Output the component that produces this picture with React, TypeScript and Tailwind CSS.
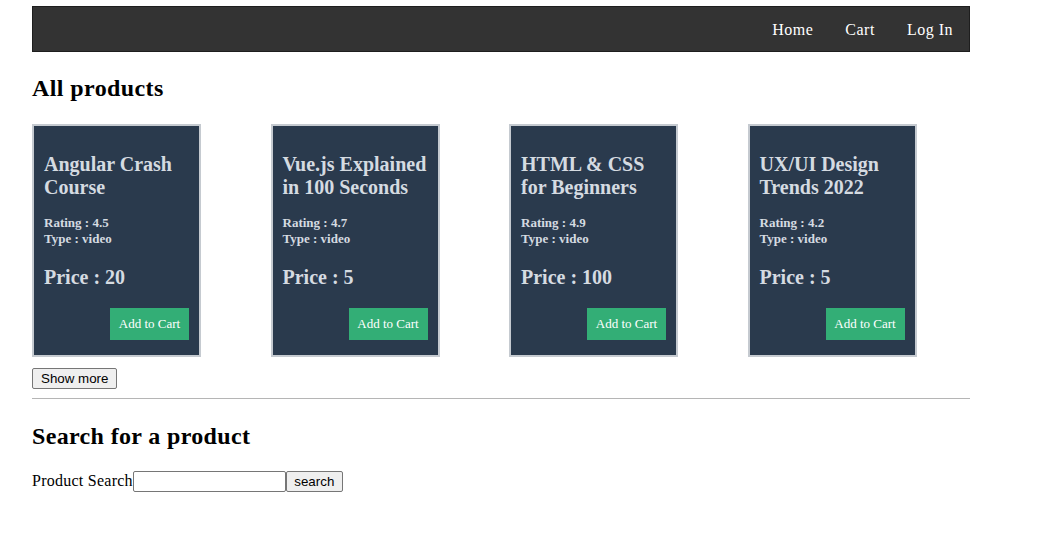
import React from "react";

const products = [
  { name: "Angular Crash Course", rating: 4.5, type: "video", price: 20 },
  { name: "Vue.js Explained in 100 Seconds", rating: 4.7, type: "video", price: 5 },
  { name: "HTML & CSS for Beginners", rating: 4.9, type: "video", price: 100 },
  { name: "UX/UI Design Trends 2022", rating: 4.2, type: "video", price: 5 },
];

const serif = "font-['Liberation_Serif','Times_New_Roman',serif]";
const sans = "font-['Liberation_Sans',Arial,sans-serif]";

function ProductCard({ p }: { p: (typeof products)[number] }) {
  return (
    <div className="w-[169px] h-[233px] bg-[#2a3a4d] border-2 border-[#c5cad0] text-[#d5dbe1] px-[10px] pt-[27px] flex flex-col">
      <h3 className="text-[20px] leading-[23px] font-bold m-0">{p.name}</h3>
      <div className="mt-[16px] text-[13px] leading-[16px] font-bold">
        <div>Rating : {p.rating}</div>
        <div>Type : {p.type}</div>
      </div>
      <div className="mt-[19px] text-[20px] leading-[23px] font-bold">Price : {p.price}</div>
      <div className="mt-[19px] flex justify-end">
        <button className={`${serif} w-[79px] h-[32px] bg-[#33ae76] text-white text-[13px]`}>Add to Cart</button>
      </div>
    </div>
  );
}

export default function App() {
  return (
    <div className={`${serif} bg-white text-black min-h-screen pt-[6px] pl-[32px]`}>
      <div className="w-[938px]">
        <nav className="h-[46px] pt-[2px] bg-[#333333] border border-[#1e1e1e] flex justify-end items-center text-white text-[16px] tracking-[0.5px]">
          <a className="px-4">Home</a>
          <a className="px-4">Cart</a>
          <a className="px-4">Log In</a>
        </nav>

        <h2 className="text-[24px] leading-[28px] font-bold mt-[22px] mb-[22px] tracking-[0.4px]">All products</h2>

        <div className="flex gap-[69.5px]">
          {products.map((p) => (
            <ProductCard key={p.name} p={p} />
          ))}
        </div>

        <button className={`${sans} mt-[11px] h-[21px] px-[8px] text-[13.33px] leading-[16px] bg-[#efefef] border border-[#767676] rounded-[2px] text-black`}>
          Show more
        </button>

        <hr className="mt-[8px] border-0 border-t border-[#b5b5b5]" />

        <h2 className="text-[24px] leading-[28px] font-bold mt-[23px] mb-[21px] tracking-[0.35px]">Search for a product</h2>

        <div className="flex items-center text-[16px] leading-[20px]">
          <label className="tracking-[0.25px]">Product Search</label>
          <input className="w-[153px] h-[21px] border border-[#767676] rounded-[2px] bg-white" />
          <button className={`${sans} w-[57px] h-[21px] text-[13.33px] bg-[#efefef] border border-[#767676] rounded-[2px] text-black`}>
            search
          </button>
        </div>
      </div>
    </div>
  );
}
